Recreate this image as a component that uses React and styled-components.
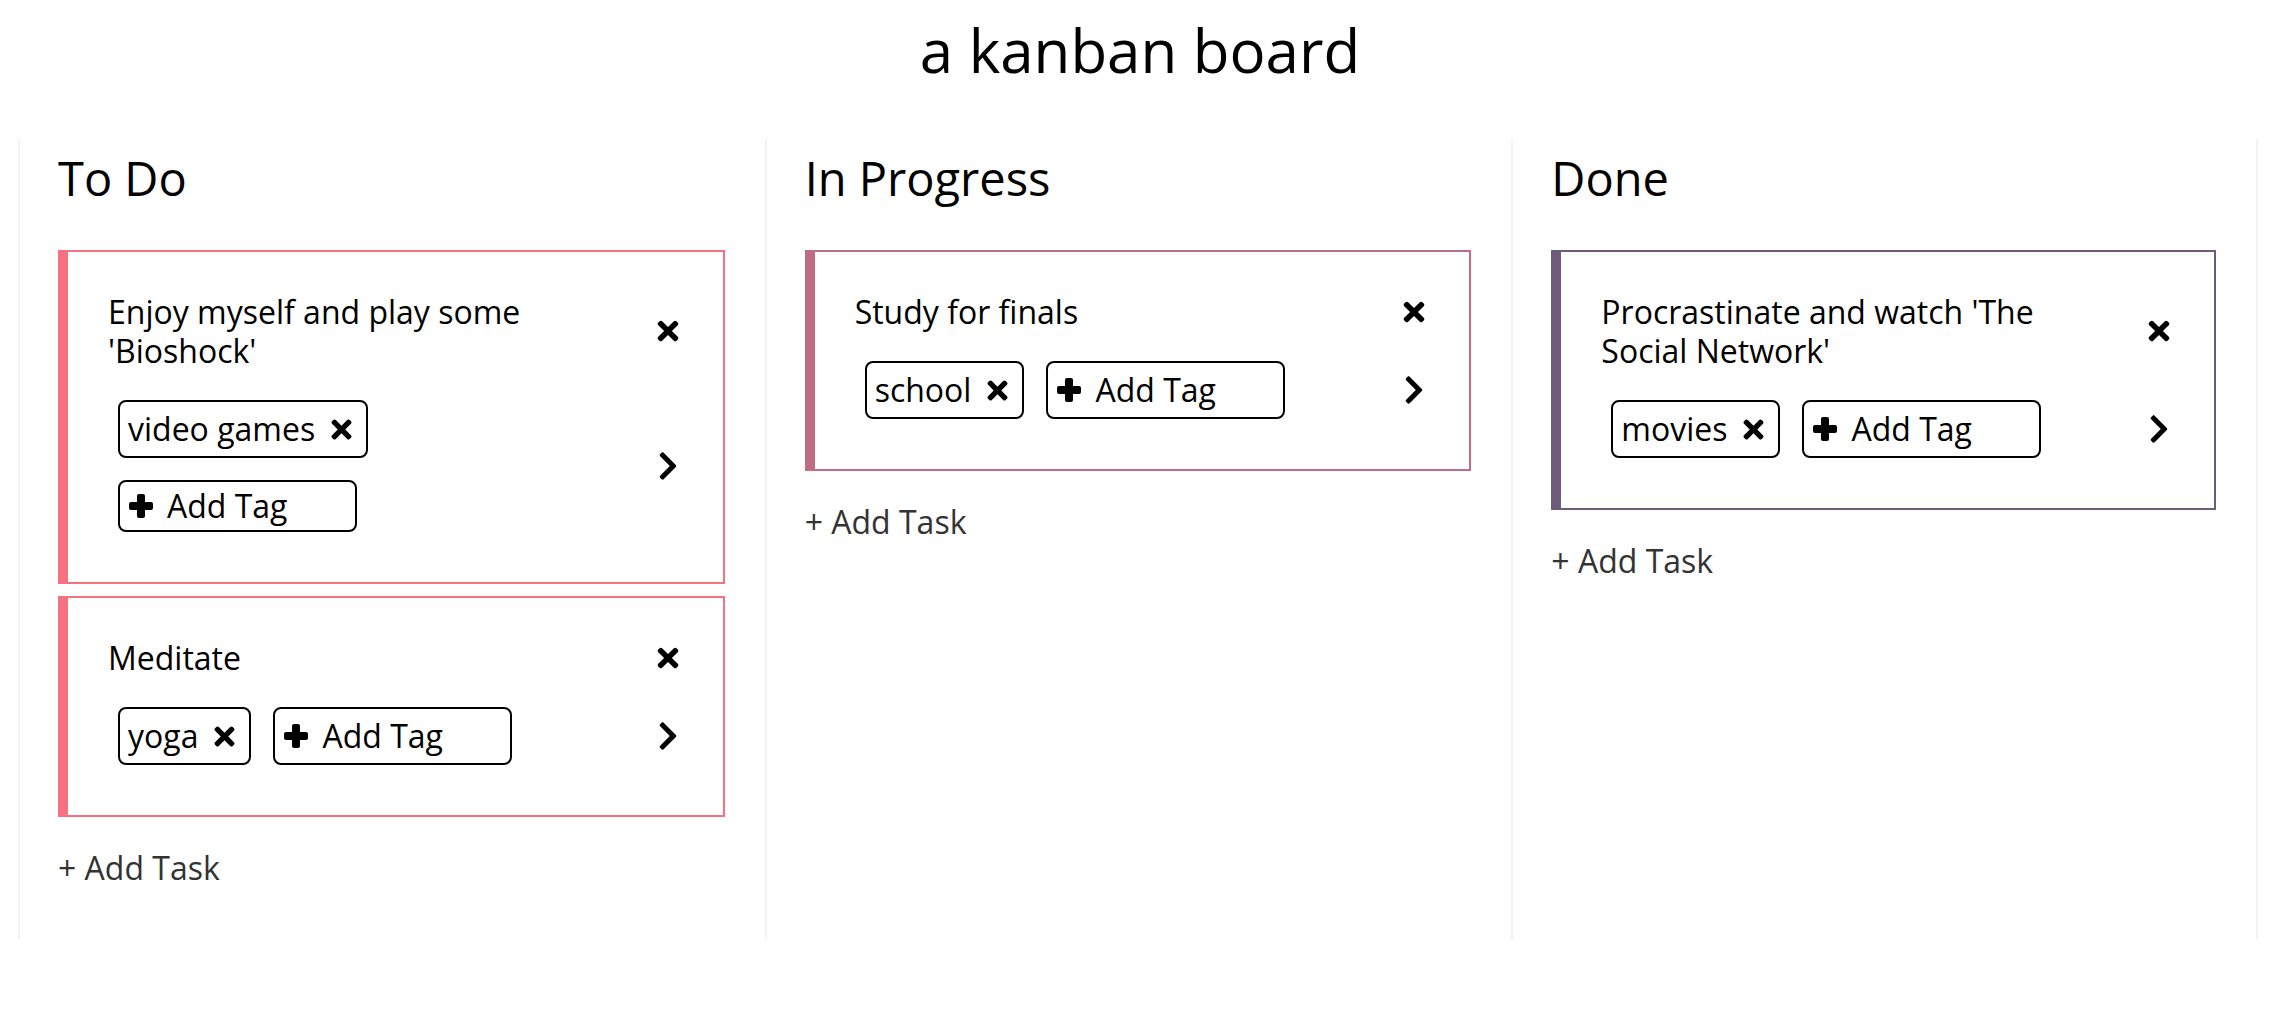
import React from 'react';
import styled, { createGlobalStyle } from 'styled-components';
import { FaTimes, FaChevronRight } from 'react-icons/fa';

const GlobalStyle = createGlobalStyle`
  html, body { margin: 0; padding: 0; background: #fff; }
  body { font-family: "Open Sans", Lato, sans-serif; color: #000; }
  * { box-sizing: border-box; }
`;

const Title = styled.h1`
  margin: 12px 0 50px;
  text-align: center;
  font-size: 60px;
  font-weight: 400;
  line-height: 77px;
`;

const Board = styled.main`
  display: grid;
  grid-template-columns: repeat(3, 1fr);
  padding: 0 22px 0 18px;
`;

const Column = styled.section`
  height: 800px;
  padding: 10px 40px 0 38px;
  border-left: 2px solid #f3f3f3;
  &:last-child { border-right: 2px solid #f3f3f3; }
`;

const ColumnTitle = styled.h2`
  margin: 0 0 43px;
  font-size: 47px;
  font-weight: 400;
  line-height: 58px;
`;

const CardList = styled.div`
  display: flex;
  flex-direction: column;
  gap: 12px;
`;

const Card = styled.article`
  display: grid;
  grid-template-columns: minmax(0, 1fr) 24px;
  column-gap: 20px;
  row-gap: 20px;
  align-items: center;
  padding: 40px 43px 40px 40px;
  border: 2px solid ${p => p.$accent};
  border-left: 10px solid ${p => p.$accent};
  background: #fff;
`;

const TaskTitle = styled.div`
  font-size: 32px;
  line-height: 39px;
  max-width: 470px;
`;

const IconButton = styled.button`
  justify-self: center;
  display: flex;
  align-items: center;
  justify-content: center;
  padding: 0;
  border: none;
  background: none;
  color: #000;
  cursor: pointer;
`;

const Tags = styled.div`
  display: flex;
  flex-wrap: wrap;
  gap: 22px;
  max-width: 480px;
  padding: 10px;
`;

const Tag = styled.span`
  display: inline-flex;
  align-items: center;
  gap: 12px;
  height: 58px;
  padding: 0 10px 0 8px;
  border: 2px solid #000;
  border-radius: 8px;
  font-size: 32px;
  line-height: 1;
`;

const AddTagButton = styled.button`
  display: flex;
  align-items: center;
  gap: 14px;
  width: 239px;
  min-height: 52px;
  padding: 0 9px;
  border: 2px solid #000;
  border-radius: 8px;
  background: #fff;
  color: #000;
  font-family: inherit;
  font-size: 32px;
  line-height: 1;
  cursor: pointer;
`;

const AddTask = styled.button`
  display: block;
  margin-top: 33px;
  padding: 0;
  border: none;
  background: none;
  color: #333;
  font-family: inherit;
  font-size: 32px;
  line-height: 36px;
  cursor: pointer;
`;

const PlusIcon = () => (
  <svg width="24" height="24" viewBox="0 0 24 24" aria-hidden="true">
    <rect x="8" y="0" width="8" height="24" rx="2" fill="#000" />
    <rect x="0" y="8" width="24" height="8" rx="2" fill="#000" />
  </svg>
);

const columns = [
  {
    name: 'To Do',
    accent: '#f67280',
    tasks: [
      { title: "Enjoy myself and play some 'Bioshock'", tags: ['video games'] },
      { title: 'Meditate', tags: ['yoga'] },
    ],
  },
  {
    name: 'In Progress',
    accent: '#c06c84',
    tasks: [{ title: 'Study for finals', tags: ['school'] }],
  },
  {
    name: 'Done',
    accent: '#6c5b7b',
    tasks: [{ title: "Procrastinate and watch 'The Social Network'", tags: ['movies'] }],
  },
];

function TaskCard({ task, accent }) {
  return (
    <Card $accent={accent}>
      <TaskTitle>{task.title}</TaskTitle>
      <IconButton aria-label="delete task"><FaTimes size={30} /></IconButton>
      <Tags>
        {task.tags.map(t => (
          <Tag key={t}>
            {t}
            <FaTimes size={29} />
          </Tag>
        ))}
        <AddTagButton>
          <PlusIcon />
          Add Tag
        </AddTagButton>
      </Tags>
      <IconButton aria-label="move task"><FaChevronRight size={32} /></IconButton>
    </Card>
  );
}

export default function App() {
  return (
    <>
      <GlobalStyle />
      <Title>a kanban board</Title>
      <Board>
        {columns.map(col => (
          <Column key={col.name}>
            <ColumnTitle>{col.name}</ColumnTitle>
            <CardList>
              {col.tasks.map(task => (
                <TaskCard key={task.title} task={task} accent={col.accent} />
              ))}
            </CardList>
            <AddTask>+ Add Task</AddTask>
          </Column>
        ))}
      </Board>
    </>
  );
}
